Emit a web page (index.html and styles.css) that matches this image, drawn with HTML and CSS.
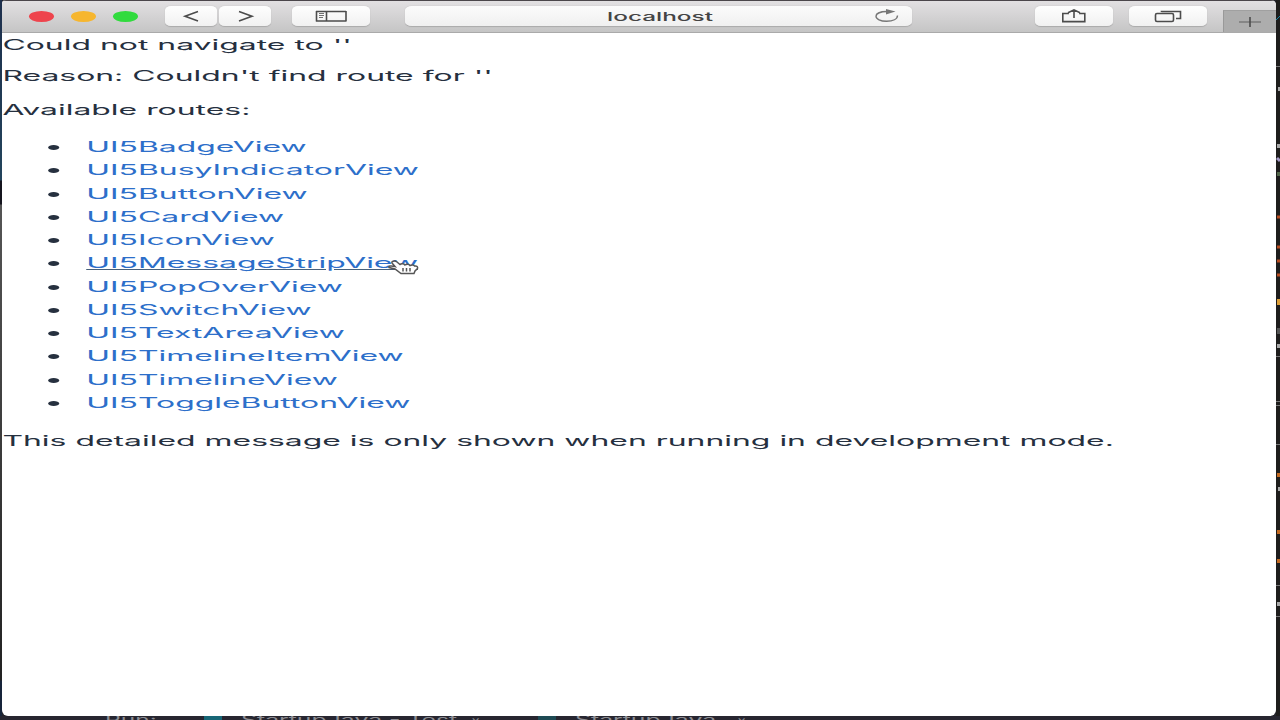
FILE: index.html
```html
<!DOCTYPE html>
<html lang="en">
<head>
    <meta charset="UTF-8">
    <meta name="viewport" content="width=device-width, initial-scale=1.0">
    <title>localhost</title>
    <link rel="stylesheet" href="styles.css">
</head>
<body>

    <div class="desktop">
        <div class="left-edge"></div>

        <div class="browser">
            <header class="toolbar">
                <div class="lights">
                    <span class="light red"></span>
                    <span class="light yellow"></span>
                    <span class="light green"></span>
                </div>

                <div class="history">
                    <button class="tool nav"><svg width="52" height="20" viewBox="0 0 52 20"><path d="M33 5.500L20 10.200L33 15"/></svg></button>
                    <button class="tool nav"><svg width="52" height="20" viewBox="0 0 52 20"><path d="M20 5.500L33 10.200L20 15"/></svg></button>
                </div>

                <button class="tool sidebar">
                    <svg width="78" height="20" viewBox="0 0 78 20"><path d="M24 5.500H54M24 15H54M24.500 5V15.500M34.500 5V15.500M54 5V15.500"/><path class="thin" d="M27 7.500H32M27 9.500H32M27 11.500H31"/></svg>
                </button>

                <div class="address">
                    <span class="host">localhost</span>
                    <svg class="reload" width="26" height="14" viewBox="0 0 26 14"><path d="M13 2.500C7 2.500 2 4.200 2 7.300C2 10 6.500 12.200 12.500 12.200C19 12.200 23.500 10 23.500 6.500"/><path class="fill" d="M12 0L21.500 2.600L12 5.400Z"/></svg>
                </div>

                <button class="tool share">
                    <svg width="78" height="20" viewBox="0 0 78 20"><path d="M34 7.500H27.800V15.600H49.800V7.500H44M39 12V3.800M33 6.800L39 3.800L45 6.800"/></svg>
                </button>
                <button class="tool tabs">
                    <svg width="78" height="20" viewBox="0 0 78 20"><rect x="26.500" y="7.500" width="18" height="8" rx="1.500"/><path d="M32.500 6V5.500H51.500V12.500H47"/></svg>
                </button>
                <button class="new-tab">
                    <svg width="24" height="12" viewBox="0 0 24 12"><path class="thin" d="M1 6H23"/><path d="M12 1V11"/></svg>
                </button>
            </header>

            <main class="page">
                <div class="content">
                    <div class="error">Could not navigate to ''</div>
                    <div class="reason">Reason: Couldn't find route for ''</div>
                    <p>Available routes:</p>
                    <ul class="routes">
                        <li><a>UI5BadgeView</a></li>
                        <li><a>UI5BusyIndicatorView</a></li>
                        <li><a>UI5ButtonView</a></li>
                        <li><a>UI5CardView</a></li>
                        <li><a>UI5IconView</a></li>
                        <li><a class="hovered">UI5MessageStripView</a></li>
                        <li><a>UI5PopOverView</a></li>
                        <li><a>UI5SwitchView</a></li>
                        <li><a>UI5TextAreaView</a></li>
                        <li><a>UI5TimelineItemView</a></li>
                        <li><a>UI5TimelineView</a></li>
                        <li><a>UI5ToggleButtonView</a></li>
                    </ul>
                    <p class="note">This detailed message is only shown when running in development mode.</p>
                </div>
            </main>
        </div>

        <!-- editor behind the browser window -->
        <div class="right-edge">
            <svg width="4" height="716" viewBox="0 0 4 716">
                <path stroke="#1687a8" d="M0 20L4 16"/>
                <path stroke="#777" d="M0 66.500H4M0 356.500H4M0 401.500H4M0 405.500H4M0 444.500H4M0 585.500H4M0 616.500H4"/>
                <path stroke="#aaa" stroke-width="4" d="M2 89H4M1 146H4M1 346H4M2 489H4M1 604H4"/>
                <path stroke="#a69bc7" stroke-width="3" d="M1 158L4 161"/>
                <path stroke="#52664a" stroke-width="4" d="M1 174H4"/>
                <path stroke="#b84d20" stroke-width="3" d="M1 217H4M1 247H4M1 261H4M1 275H4"/>
                <path stroke="#dfa038" stroke-width="6" d="M1 302H4"/>
                <path stroke="#555" stroke-width="6" d="M1 331H4"/>
                <path stroke="#c46a20" stroke-width="4" d="M1 475H4M1 532H4M1 561H4"/>
            </svg>
        </div>

        <footer class="ide-bar">
            <span class="run">Run:</span>
            <span class="ide-icon"></span>
            <span class="config">StartupJava - Test</span>
            <span class="close">×</span>
            <span class="ide-icon dim"></span>
            <span class="config second">StartupJava</span>
            <span class="close">×</span>
        </footer>
    </div>

    <svg class="pointer" width="32" height="17" viewBox="0 0 32 17">
        <path d="M8 10L2 8.500C1 7 4 6.500 8 7.500L5 4C4 2 8 1.500 10 3L13 5.500C14 4.500 17 4.500 18 6C19.500 5 22 5 23 6.500C25 5.500 27 6 27.500 7C30 6.500 31 8 30.500 9.500L28 12L27 14.500H14Z"/>
        <path class="fingers" d="M16 9V12.500M19.500 9V12.500M23 9V12.500"/>
    </svg>

</body>
</html>
```

FILE: styles.css
```css
body {
    margin: 0;
    height: 720px;
    overflow: hidden;
    font-family: Inter, sans-serif;
    background: #24242b;
}

.desktop {
    display: grid;
    grid-template-columns: 2px 1274px 4px;
    grid-template-rows: 716px 4px;
    height: 720px;
}

.left-edge {
    background: linear-gradient(#1d2f4c 0, #23445c 180px, #15151e 181px, #15151e 204px, #555 205px, #222 680px, #17243a 681px);
}

.right-edge {
    background: #1e1d1c;
}

.right-edge svg {
    display: block;
    fill: none;
}

.browser {
    display: flex;
    flex-direction: column;
    background: #fff;
    border-radius: 4px 5px 6px 6px;
    overflow: hidden;
}

/* Toolbar */
.toolbar {
    display: flex;
    flex: none;
    box-sizing: border-box;
    height: 33px;
    padding-top: 5px;
    border-top: 1px solid #4b464b;
    border-bottom: 1px solid #aaa;
    background: linear-gradient(#e2e0e2, #c5c5c5);
}

.lights {
    display: flex;
    gap: 17px;
    padding: 5px 0 0 27px;
    width: 136px;
}

.light {
    width: 25px;
    height: 11px;
    border-radius: 50%;
}

.red {
    background: #ee444d;
}

.yellow {
    background: #f6b62f;
}

.green {
    background: #31db3e;
}

.history {
    display: flex;
    gap: 2px;
}

.tool {
    display: flex;
    justify-content: center;
    width: 78px;
    height: 20px;
    padding: 0;
    border: 0;
    border-radius: 6px / 4px;
    background: linear-gradient(#fefefe, #f1f1f1);
    box-shadow: 0 0.5px 1px #aaa;
}

.nav {
    width: 52px;
}

.tool svg,
.new-tab svg,
.reload {
    flex: none;
    fill: none;
    stroke: #4c4c4c;
    stroke-width: 1.6;
}

.sidebar {
    margin-left: 21px;
}

.address {
    display: flex;
    align-items: center;
    justify-content: center;
    box-sizing: border-box;
    width: 507px;
    height: 20px;
    margin-left: 35px;
    padding-left: 41px;
    border-radius: 7px / 4px;
    background: linear-gradient(#fbfbfb, #f0f0f0);
    box-shadow: 0 0.5px 1px #aaa;
}

.host {
    flex: 1;
    text-align: center;
    font-size: 12px;
    font-weight: 500;
    color: #444;
    transform: scaleX(2.03);
}

.address .reload {
    margin-right: 12px;
    stroke: #777;
    stroke-width: 1.4;
}

.reload .fill {
    fill: #777;
    stroke: none;
}

.share {
    margin-left: 123px;
}

.tabs {
    margin-left: 16px;
}

.new-tab {
    display: flex;
    align-items: center;
    justify-content: center;
    width: 53px;
    height: 22px;
    margin: 4px 0 0 16px;
    padding: 0;
    border: 0;
    border-left: 1px solid #999;
    border-top: 1px solid #a0a0a0;
    background: #adadad;
}

.new-tab .thin,
.tool .thin {
    stroke-width: 0.8;
}

/* Route error page, glyphs are drawn wide */
.page {
    flex: 1;
    overflow: hidden;
}

.content {
    width: 570px;
    padding-left: 0.2px;
    font-size: 14.500px;
    line-height: 23.270px;
    color: #26303f;
    white-space: nowrap;
    transform: scaleX(2.2);
    transform-origin: 0 0;
}

.error {
    padding-top: 0.4px;
}

.reason {
    margin-top: 7px;
}

.content p {
    margin: 11px 0 0;
}

.routes {
    margin: 13.800px 0 0;
    padding-left: 38.100px;
}

.routes li::marker {
    font-size: 16px;
}

.routes a {
    color: #2d6fca;
}

.routes .hovered {
    text-decoration: underline;
    text-decoration-color: #47607a;
    text-decoration-thickness: 1px;
}

.content .note {
    margin-top: 14.400px;
}

/* Hand cursor over the hovered link */
.pointer {
    position: absolute;
    left: 387px;
    top: 259px;
    fill: #fff;
    stroke: #555;
    stroke-width: 1.5;
}

/* Run bar of the editor */
.ide-bar {
    grid-column: 1 / 4;
    display: flex;
    height: 4px;
    overflow: hidden;
    background: #272630;
    color: #8c8c92;
    font-size: 14px;
    line-height: 8px;
    white-space: nowrap;
}

.ide-bar span {
    flex: none;
}

.run {
    width: 99px;
    padding-left: 105px;
    transform-origin: 105px 0;
    transform: scaleX(1.75);
}

.ide-icon {
    width: 18px;
    height: 4px;
    background: #176676;
}

.ide-icon.dim {
    background: #1e4a54;
}

.config {
    width: 230px;
    margin-left: 19px;
    transform: scaleX(1.77);
    transform-origin: 0 0;
}

.second {
    width: 162px;
}

.close {
    width: 67px;
}
```
